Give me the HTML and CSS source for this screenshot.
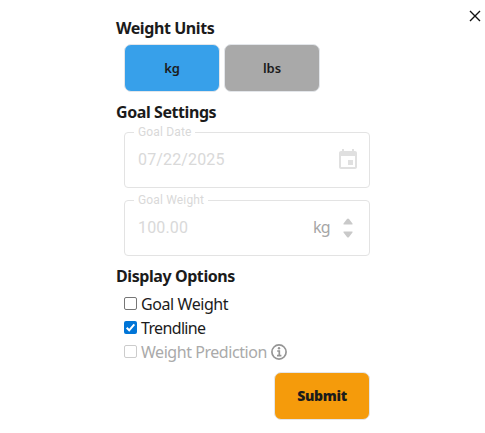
FILE: index.html
```
<!DOCTYPE html>
<html lang="en">
<head>
<meta charset="utf-8">
<title>Settings</title>
<link rel="stylesheet" href="styles.css">
</head>
<body>
<button class="close" aria-label="Close"><svg width="12" height="12" viewBox="0 0 12 12"><path d="M1 1L11 11M11 1L1 11"/></svg></button>
<form class="settings">
  <h2 class="h-units">Weight Units</h2>
  <div class="units">
    <button type="button" class="btn primary">kg</button>
    <button type="button" class="btn muted">lbs</button>
  </div>
  <h2 class="h-goal">Goal Settings</h2>
  <div class="fields">
    <fieldset class="field">
      <legend>Goal Date</legend>
      <div class="row"><span class="value">07/22/2025</span>
      <svg class="calendar" width="24" height="24" viewBox="0 0 24 24"><path d="M17 12h-5v5h5v-5zM16 1v2H8V1H6v2H5c-1.11 0-1.99.9-1.99 2L3 19c0 1.1.89 2 2 2h14c1.1 0 2-.9 2-2V5c0-1.1-.9-2-2-2h-1V1h-2zm3 18H5V8h14v11z"/></svg></div>
    </fieldset>
    <fieldset class="field">
      <legend>Goal Weight</legend>
      <div class="row"><span class="value">100.00</span><span class="unit">kg</span>
      <svg class="stepper" width="10" height="20" viewBox="0 0 10 20"><path d="M0.5 6.5V5.5L4 1Q5 0 6 1L9.5 5.5V6.5ZM0.5 13.5H9.5V14.5L6 19Q5 20 4 19L0.5 14.5Z"/></svg></div>
    </fieldset>
  </div>
  <h2 class="h-display">Display Options</h2>
  <div class="options">
    <label class="option"><span class="box"></span><span class="o-goal">Goal Weight</span></label>
    <label class="option"><span class="box checked"><svg width="13" height="13" viewBox="0 0 13 13"><path d="M2.7 6.8L5.2 9.3L10.3 3.4"/></svg></span><span class="o-trend">Trendline</span></label>
    <label class="option disabled"><span class="box"></span><span class="o-pred">Weight Prediction</span>
      <svg class="info" width="16" height="16" viewBox="0 0 16 16"><circle cx="8" cy="8" r="7.1"/><path d="M6.2 7H8.3V11.7M6 11.7H10.4"/><circle class="dot" cx="8" cy="4.3" r="1.2"/></svg></label>
  </div>
  <div class="actions"><button type="button" class="btn submit">Submit</button></div>
</form>
</body>
</html>
```
FILE: styles.css
```
* { box-sizing: border-box; }
body { margin: 0; background: #fff; color: #1b1b1b; font: 16px/24px "Noto Sans", sans-serif; overflow: hidden; }
button { padding: 0; font: inherit; color: inherit; }
.close { position: absolute; top: 10px; right: 4px; width: 12px; height: 12px; border: 0; background: none; display: flex; }
.close path { stroke: #111; stroke-width: 1.4; fill: none; }
.settings { width: 254px; margin-left: 116px; padding-top: 16px; }
h2 { margin: 0; font-size: 16px; font-weight: 700; line-height: 24px; white-space: nowrap; letter-spacing: -0.42px; }
.units { display: flex; gap: 4px; padding: 4px 0 0 8px; }
.btn { width: 96px; height: 48px; border: 1px solid #e3e6ea; border-radius: 7px; font-size: 13px; font-weight: 600; }
.primary { background: #37a0ea; letter-spacing: -0.2px; }
.muted { background: #a9a9a9; letter-spacing: -0.1px; }
.h-goal { margin-top: 8px; }
.fields { display: grid; gap: 6px; margin: 2px 0 0 8px; }
.field { min-width: 0; height: 62px; margin: 0; padding: 0 13px 0 9px; border: 1px solid #e3e3e3; border-radius: 4px; font-family: Roboto, sans-serif; color: #d9d9d9; }
legend { padding: 0 4px; font-size: 12px; line-height: 12px; letter-spacing: 0.15px; }
.row { display: flex; align-items: center; height: 44px; padding-left: 4px; }
.value { flex: 1; font-size: 16px; letter-spacing: 0.15px; }
.calendar { fill: #e0e0e0; margin-right: -4px; }
.unit { color: #a6a6a6; font-family: "Noto Sans", sans-serif; font-size: 16px; letter-spacing: -0.7px; margin: -2px 13px 0 0; }
.stepper { fill: #c9c9c9; margin-right: 3px; }
.h-display { margin-top: 8px; }
.options { padding: 4px 0 0 8px; }
.option { display: flex; align-items: center; height: 24px; white-space: nowrap; }
.o-goal { letter-spacing: -0.42px; }
.o-trend { letter-spacing: -0.65px; }
.o-pred { letter-spacing: -0.45px; }
.box { width: 13px; height: 13px; margin: -1px 4px 0 0; border: 1px solid #767676; border-radius: 2px; background: #fff; }
.checked { border: 0; background: #0075d7; display: flex; }
.checked path { fill: none; stroke: #fff; stroke-width: 2; }
.disabled { color: #aaa; }
.disabled .box { border-color: #ccc; }
.info { margin-left: 4px; fill: none; stroke: #959595; stroke-width: 1.7; }
.info .dot { fill: #959595; stroke: none; }
.actions { display: flex; justify-content: flex-end; margin-top: 8px; }
.submit { background: #f59b0b; font-size: 14px; font-weight: 900; letter-spacing: -0.3px; }
```
